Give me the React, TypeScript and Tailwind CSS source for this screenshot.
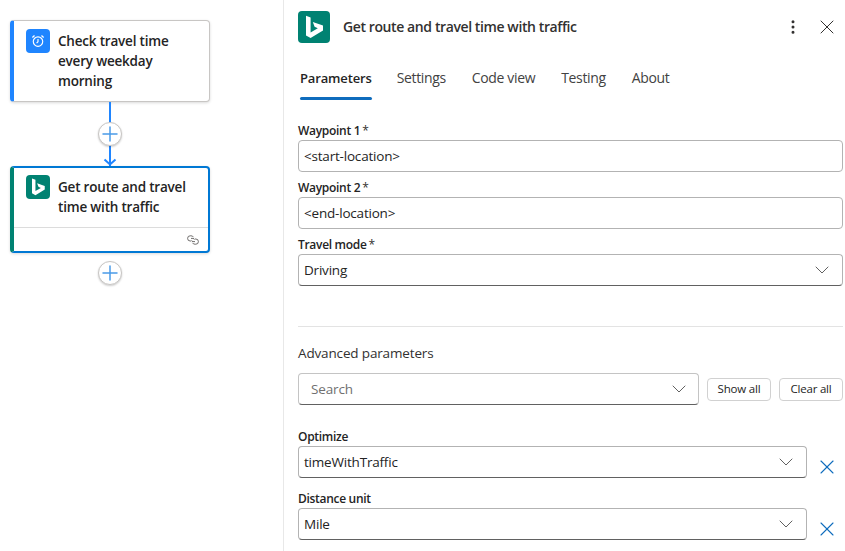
import React from 'react';
import { ChevronDown, EllipsisVertical, Plus, X } from 'lucide-react';

const BingIcon = ({ size }: { size: number }) => (
  <svg width={size} height={size} viewBox="0 0 32 32">
    <path
      d="M8 4.8 L12.6 6.4 V21.4 L19.8 17.2 L16.6 15.7 L14.8 11 L25 14.5 V19.4 L12.6 27 L8 24.4 Z"
      fill="#fff"
    />
  </svg>
);

const AlarmIcon = () => (
  <svg width="14" height="14" viewBox="0 0 16 16" fill="none" stroke="#fff" strokeWidth="1.3">
    <circle cx="8" cy="8.7" r="5.4" />
    <path d="M8 5.6 V8.8 L6.4 10.4" />
    <path d="M1.6 4 L4 1.8 M14.4 4 L12 1.8" strokeWidth="1.5" />
  </svg>
);

const LinkIcon = () => (
  <svg width="12" height="10" viewBox="0 0 12 10" fill="none" stroke="#605e5c" strokeWidth="0.9">
    <path d="M6.5 2.2 A2.6 2.6 0 0 0 4 0.8 H3.2 A2.6 2.6 0 0 0 3.2 6 H4" />
    <path d="M5.5 7.8 A2.6 2.6 0 0 0 8 9.2 H8.8 A2.6 2.6 0 0 0 8.8 4 H8" />
    <path d="M4 3.4 H6 A1.4 1.4 0 0 1 7.4 4.6 M8 6.6 H6 A1.4 1.4 0 0 1 4.6 5.4" />
  </svg>
);

const AddButton = () => (
  <div className="flex h-6 w-6 items-center justify-center rounded-full border border-[#c8c6c4] bg-white shadow-[0_1px_2px_rgba(0,0,0,0.2)]">
    <Plus size={24} strokeWidth={1.5} className="shrink-0 text-[#4a9be8]" />
  </div>
);

const Field = ({
  label,
  value,
  required,
  select,
  dark,
}: {
  label: string;
  value: string;
  required?: boolean;
  select?: boolean;
  dark?: boolean;
}) => (
  <div>
    <div className="flex h-[17px] items-center pb-[2px] text-[12px] font-semibold tracking-[-0.3px] text-[#242424]">
      {label}
      {required && <span className="ml-[2px] font-normal text-[#323130]">*</span>}
    </div>
    <div
      className={`flex h-8 items-center justify-between rounded border border-[#b3b3b3] pl-[5px] pr-[8px] text-[13.5px] tracking-[-0.2px] text-[#242424] ${
        dark ? 'border-b-[#616161]' : ''
      }`}
    >
      <span className="pt-[1px]">{value}</span>
      {select && <ChevronDown size={24} strokeWidth={1} className="text-[#616161]" />}
    </div>
  </div>
);

const tabs = ['Settings', 'Code view', 'Testing', 'About'];

const App: React.FC = () => {
  return (
    <div className="flex h-[551px] w-[845px] overflow-hidden bg-white font-['Open_Sans',sans-serif] text-[#242424]">
      {/* designer canvas */}
      <div className="flex w-[284px] shrink-0 flex-col border-r border-[#e8e8e8] pl-[10px] pt-5">
        <div className="flex h-[82px] w-[200px] rounded-sm border border-l-4 border-[#c8c6c4] border-l-[#1f85ff] bg-white pl-3 pt-2 shadow-[0_1px_3px_rgba(0,0,0,0.15)]">
          <div className="flex h-6 w-6 shrink-0 items-center justify-center rounded-sm bg-[#1f85ff]">
            <AlarmIcon />
          </div>
          <div className="ml-2 w-[135px] pt-[2px] text-[13.5px] font-semibold leading-5 tracking-[-0.2px] text-[#242424]">
            Check travel time every weekday morning
          </div>
        </div>

        <div className="relative flex h-16 w-[200px] flex-col items-center">
          <div className="h-full w-0.5 bg-[#1f85ff]" />
          <div className="absolute top-5">
            <AddButton />
          </div>
          <svg className="absolute bottom-0" width="14" height="8" viewBox="0 0 14 8" fill="none" stroke="#1f85ff" strokeWidth="2">
            <path d="M1.5 1.5 L7 6.5 L12.5 1.5" />
          </svg>
        </div>

        <div className="flex h-[87px] w-[200px] flex-col rounded-sm border-2 border-l-4 border-[#0078d4] border-l-[#008272] bg-white shadow-[0_1px_3px_rgba(0,0,0,0.15)]">
          <div className="flex h-[59px] pl-3 pt-[7px]">
            <div className="flex h-6 w-6 shrink-0 items-center justify-center rounded-sm bg-[#008272]">
              <BingIcon size={24} />
            </div>
            <div className="ml-2 w-[135px] pt-[2px] text-[13.5px] font-semibold leading-5 tracking-[-0.2px] text-[#242424]">
              Get route and travel time with traffic
            </div>
          </div>
          <div className="flex flex-1 items-center justify-end border-t border-[#dcdcdc] pr-[9px] pt-[1px]">
            <LinkIcon />
          </div>
        </div>

        <div className="flex w-[200px] justify-center pt-2">
          <AddButton />
        </div>
      </div>

      {/* details panel */}
      <div className="flex min-w-0 flex-1 flex-col pl-[14px] pr-[2px]">
        <div className="flex h-[54px] items-start pt-[11px]">
          <div className="flex h-8 w-8 items-center justify-center rounded-sm bg-[#008272]">
            <BingIcon size={32} />
          </div>
          <div className="ml-[13px] mt-[5px] text-[14px] font-semibold tracking-[-0.4px] text-[#323130]">
            Get route and travel time with traffic
          </div>
          <div className="ml-auto mt-[4px] flex items-center">
            <EllipsisVertical size={18} strokeWidth={2} className="mr-[13px] text-[#323130]" />
            <X size={24} strokeWidth={1} className="mr-[4px] text-[#323130]" />
          </div>
        </div>

        <div className="flex h-[46px] items-start pl-[2px] text-[14px] tracking-[-0.35px] text-[#424242]">
          <div className="mr-[25px] flex h-[46px] flex-col justify-between pt-[14px]">
            <span className="text-[13px] leading-5 font-semibold tracking-[-0.15px] text-[#242424]">Parameters</span>
            <div className="h-[3px] rounded-sm bg-[#0f6cbd]" />
          </div>
          {tabs.map((tab) => (
            <span key={tab} className="mr-[26px] pt-[14px] leading-5">
              {tab}
            </span>
          ))}
        </div>

        <div className="flex flex-col gap-[8px] pt-[23px]">
          <Field label="Waypoint 1" value="<start-location>" required />
          <Field label="Waypoint 2" value="<end-location>" required />
          <Field label="Travel mode" value="Driving" required select dark />
        </div>

        <div className="mt-10 border-t border-[#e3e3e3]" />

        <div className="mt-[17px] text-[13.5px] leading-[18px] tracking-[-0.15px] text-[#323130]">Advanced parameters</div>

        <div className="mt-[11px] flex items-center gap-2">
          <div className="flex h-8 w-[401px] items-center justify-between rounded border border-[#c4c4c4] border-b-[#616161] pl-3 pr-[7px] text-[13.5px] tracking-[-0.15px] text-[#707070]">
            <span>Search</span>
            <ChevronDown size={24} strokeWidth={1} className="text-[#616161]" />
          </div>
          <div className="flex h-[23px] w-16 items-center justify-center rounded border border-[#d1d1d1] text-[11.5px] tracking-[-0.2px] text-[#242424]">
            Show all
          </div>
          <div className="flex h-[23px] w-16 items-center justify-center rounded border border-[#d1d1d1] text-[11.5px] tracking-[-0.2px] text-[#242424]">
            Clear all
          </div>
        </div>

        <div className="mt-[24px] flex flex-col gap-[13px]">
          {[
            { label: 'Optimize', value: 'timeWithTraffic' },
            { label: 'Distance unit', value: 'Mile' },
          ].map((f) => (
            <div key={f.label} className="flex items-end">
              <div className="w-[509px]">
                <Field label={f.label} value={f.value} select dark />
              </div>
              <X size={24} strokeWidth={1.1} className="mb-[-1px] ml-[8px] text-[#0f6cbd]" />
            </div>
          ))}
        </div>
      </div>
    </div>
  );
};

export default App;
